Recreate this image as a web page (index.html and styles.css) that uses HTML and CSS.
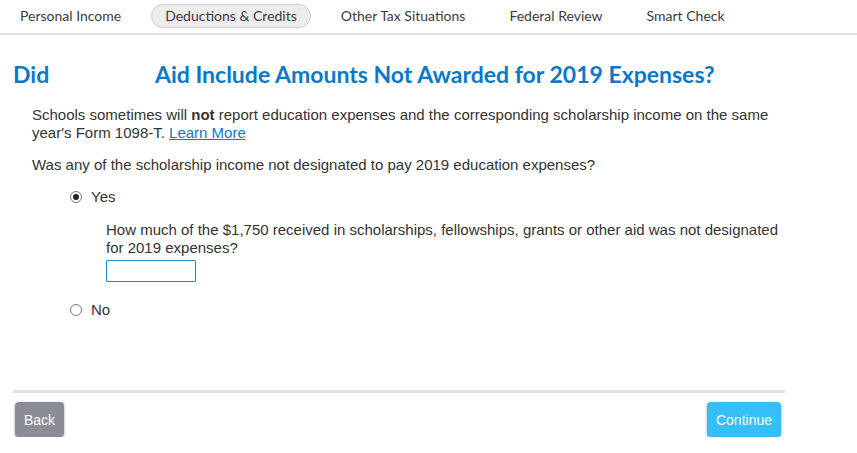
FILE: index.html
```html
<!DOCTYPE html>
<html lang="en">
<head>
<meta charset="utf-8">
<title>Deductions &amp; Credits</title>
<link rel="stylesheet" href="styles.css">
</head>
<body>
<nav class="steps">
  <span class="step">Personal Income</span>
  <span class="step step-active">Deductions &amp; Credits</span>
  <span class="step">Other Tax Situations</span>
  <span class="step">Federal Review</span>
  <span class="step">Smart Check</span>
</nav>

<main class="page">
  <h1 class="title"><span class="title-lead">Did</span><span class="title-rest">Aid Include Amounts Not Awarded for 2019 Expenses?</span></h1>

  <div class="body">
    <p class="intro">Schools sometimes will <b>not</b> report education expenses and the corresponding scholarship income on the same year's Form 1098-T. <a href="#" class="link">Learn More</a></p>
    <p class="question">Was any of the scholarship income not designated to pay 2019 education expenses?</p>

    <div class="choices">
      <label class="choice"><span class="radio radio-on"></span>Yes</label>
      <div class="followup">
        <p class="followup-q">How much of the $1,750 received in scholarships, fellowships, grants or other aid was not designated for 2019 expenses?</p>
        <input class="amount" type="text">
      </div>
      <label class="choice"><span class="radio"></span>No</label>
    </div>
  </div>

  <div class="footer">
    <button class="btn btn-back">Back</button>
    <button class="btn btn-continue">Continue</button>
  </div>
</main>
</body>
</html>
```

FILE: styles.css
```css
* { box-sizing: border-box; }

body {
  margin: 0;
  background: #fff;
  font-family: "Liberation Sans", Arial, sans-serif;
  color: #333;
}

/* top step bar */
.steps {
  display: flex;
  align-items: center;
  gap: 16px;
  height: 35px;
  padding: 0 6px 2px;
  border-bottom: 2px solid #e1e1e1;
  font-family: Lato, "Open Sans", sans-serif;
  font-size: 14px;
  color: #3b3b3b;
}
.step {
  padding: 3px 13px;
  line-height: 16px;
  border: 1px solid transparent;
  border-radius: 12px;
}
.step-active {
  background: #ececec;
  border-color: #cfcfcf;
}

.page {
  width: 785px;
  padding-left: 13px;
}

.title {
  margin: 26px 0 0;
  display: flex;
  font-family: Lato, "Open Sans", sans-serif;
  font-weight: 700;
  font-size: 23px;
  line-height: 26px;
  color: #0b78c8;
}
.title-lead { width: 142px; }

.body {
  padding-left: 19px;
  font-size: 15px;
  line-height: 18px;
}
.intro { margin: 19px 0 0; }
.link { color: #0b78c8; }
.question { margin: 14px 0 0; }

.choices {
  padding-left: 38px;
  margin-top: 14px;
}
.choice {
  display: flex;
  align-items: center;
  gap: 9px;
  height: 18px;
}
.radio {
  width: 12px;
  height: 12px;
  border: 1px solid #777;
  border-radius: 50%;
  display: flex;
  align-items: center;
  justify-content: center;
}
.radio-on::after {
  content: "";
  width: 6px;
  height: 6px;
  border-radius: 50%;
  background: #222;
}

.followup {
  padding: 15px 0 19px 36px;
}
.followup-q { margin: 0 0 3px; }
.amount {
  display: block;
  width: 90px;
  height: 22px;
  border: 1px solid #1e88d0;
  border-radius: 1px;
  padding: 0 4px;
  font: inherit;
}

.footer {
  margin-top: 71px;
  border-top: 3px solid #e2e2e2;
  padding: 9px 4px 0 2px;
  display: flex;
  justify-content: space-between;
}
.btn {
  font-family: "Liberation Sans", Arial, sans-serif;
  font-size: 14px;
  color: #fff;
  border: 0;
  border-radius: 4px;
  height: 35px;
  padding: 0 9px;
  box-shadow: 0 1px 3px rgba(0,0,0,0.35);
}
.btn-back { background: #8a8d96; }
.btn-continue { background: #35bff8; }
```
